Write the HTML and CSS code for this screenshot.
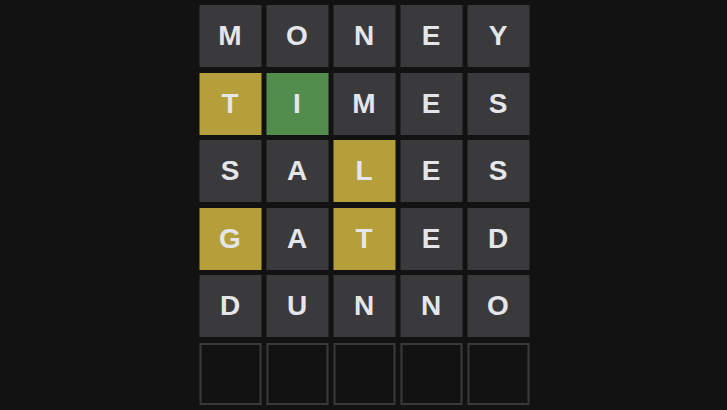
FILE: index.html
```html
<!DOCTYPE html>
<html>
<head>
<meta charset="utf-8">
<link rel="stylesheet" href="styles.css">
</head>
<body>
<div class="board">
  <div class="row"><div class="tile absent">M</div><div class="tile absent">O</div><div class="tile absent">N</div><div class="tile absent">E</div><div class="tile absent">Y</div></div>
  <div class="row"><div class="tile present">T</div><div class="tile correct">I</div><div class="tile absent">M</div><div class="tile absent">E</div><div class="tile absent">S</div></div>
  <div class="row"><div class="tile absent">S</div><div class="tile absent">A</div><div class="tile present">L</div><div class="tile absent">E</div><div class="tile absent">S</div></div>
  <div class="row"><div class="tile present">G</div><div class="tile absent">A</div><div class="tile present">T</div><div class="tile absent">E</div><div class="tile absent">D</div></div>
  <div class="row"><div class="tile absent">D</div><div class="tile absent">U</div><div class="tile absent">N</div><div class="tile absent">N</div><div class="tile absent">O</div></div>
  <div class="row"><div class="tile empty"></div><div class="tile empty"></div><div class="tile empty"></div><div class="tile empty"></div><div class="tile empty"></div></div>
</div>
</body>
</html>
```
FILE: styles.css
```css
html, body {
  margin: 0;
  padding: 0;
  background: #121213;
  width: 727px;
  height: 410px;
  overflow: hidden;
}
.board {
  width: 330px;
  margin: 0 auto;
  padding-top: 5px;
  display: grid;
  grid-template-rows: repeat(6, 62px);
  row-gap: 5.5px;
  transform: translateX(0.5px);
}
.row {
  display: grid;
  grid-template-columns: repeat(5, 62px);
  column-gap: 5px;
}
.tile {
  box-sizing: border-box;
  display: flex;
  align-items: center;
  justify-content: center;
  font-family: "Liberation Sans", Arial, sans-serif;
  font-weight: bold;
  font-size: 28px;
  color: #e4e6e9;
  text-transform: uppercase;
}
.absent { background: #3a3a3c; }
.present { background: #b59f3b; }
.correct { background: #538d4e; }
.empty { border: 2px solid #3a3a3c; }
```
